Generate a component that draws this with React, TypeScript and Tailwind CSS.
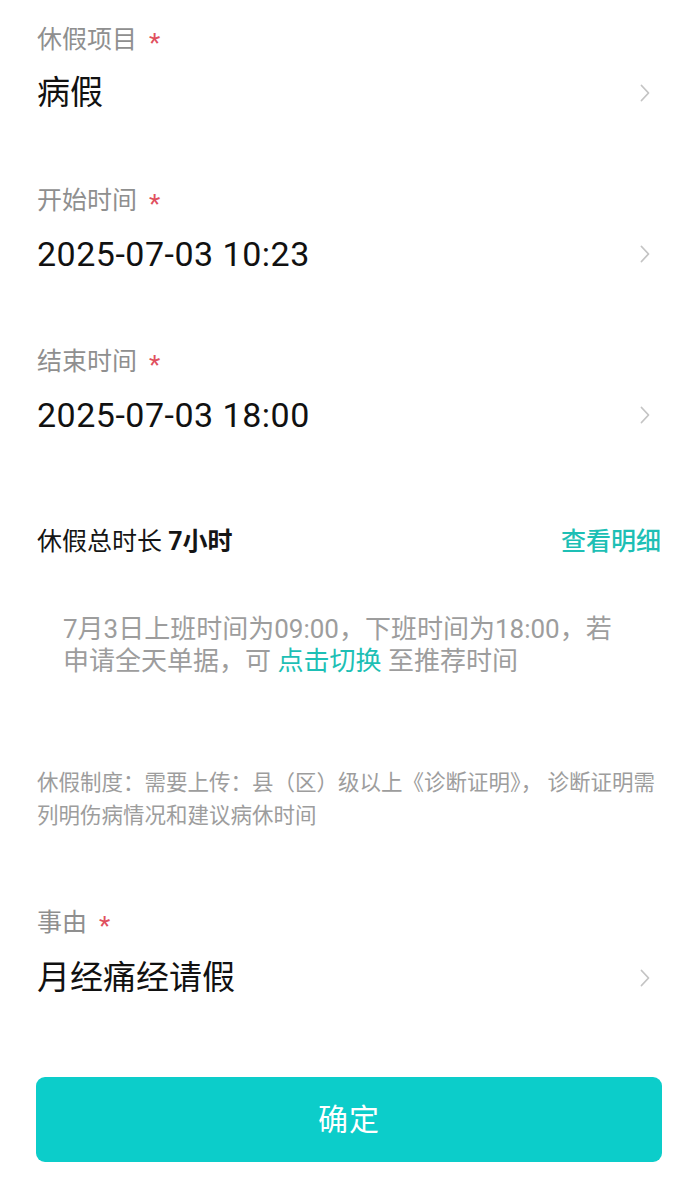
import { ReactNode } from 'react';

const FONT = 'font-["Roboto","Noto_Sans_CJK_SC",sans-serif]';

function Chevron() {
  return (
    <svg viewBox="0 0 12 20" className="w-[12px] h-[20px] mr-[10px] shrink-0" fill="none">
      <path d="M2.5 2.5 L9.5 10 L2.5 17.5" stroke="#c4c4c4" strokeWidth="1.8" strokeLinecap="round" strokeLinejoin="round" />
    </svg>
  );
}

function Label({ children }: { children: ReactNode }) {
  return (
    <div className="flex items-center h-[30px] text-[25px] leading-[30px] text-[#8f8f8f]">
      <span>{children}</span>
      <span className="ml-[12px] text-[26px] text-[#e0505e] translate-y-[3px]">*</span>
    </div>
  );
}

interface FieldProps {
  label: string;
  value: string;
  date?: boolean;
  gap?: string;
  top?: string;
  bottom?: string;
}

function Field({ label, value, date, gap = 'mt-[18px]', top = 'pt-[25px]', bottom = 'pb-[48px]' }: FieldProps) {
  return (
    <div className={`${top} ${bottom}`}>
      <Label>{label}</Label>
      <div className={`${gap} flex items-center h-[40px]`}>
        <span className={`flex-1 leading-[40px] text-[#111] ${date ? 'text-[34px] tracking-[0.5px]' : 'text-[33px]'}`}>{value}</span>
        <Chevron />
      </div>
    </div>
  );
}

export default function App() {
  return (
    <div className={`${FONT} w-[698px] h-[1200px] bg-white px-[37px] overflow-hidden`}>
      {/* Form fields */}
      <Field label="休假项目" value="病假" />
      <Field label="开始时间" value="2025-07-03 10:23" date />
      <Field label="结束时间" value="2025-07-03 18:00" date />

      {/* Total */}
      <div className="mt-[44px] flex items-center justify-between h-[30px]">
        <span className="text-[25px] leading-[30px] text-[#151515]">
          休假总时长 <span className="font-bold">7小时</span>
        </span>
        <span className="text-[25px] leading-[30px] font-medium text-[#1dbfb5]">查看明细</span>
      </div>

      {/* Hint */}
      <div className="mt-[56px] pl-[26px] text-[26px] leading-[32px] text-[#9d9d9d] whitespace-nowrap">
        7月3日上班时间为09:00，下班时间为18:00，若
        <br />
        申请全天单据，可 <span className="text-[#1dbfb5]">点击切换</span> 至推荐时间
      </div>

      {/* Policy */}
      <div className="mt-[89px] text-[21.5px] leading-[33px] text-[#9d9d9d] whitespace-nowrap">
        休假制度：需要上传：县（区）级以上《诊断证明》，&nbsp;诊断证明需
        <br />
        列明伤病情况和建议病休时间
      </div>

      <Field label="事由" value="月经痛经请假" top="pt-[76px]" gap="mt-[20px]" bottom="pb-0" />

      <button className="mt-[79px] -mx-[1px] w-[calc(100%+2px)] h-[85px] rounded-[9px] bg-[#0ccdca] text-white text-[30px] tracking-[1px]">
        确定
      </button>
    </div>
  );
}
